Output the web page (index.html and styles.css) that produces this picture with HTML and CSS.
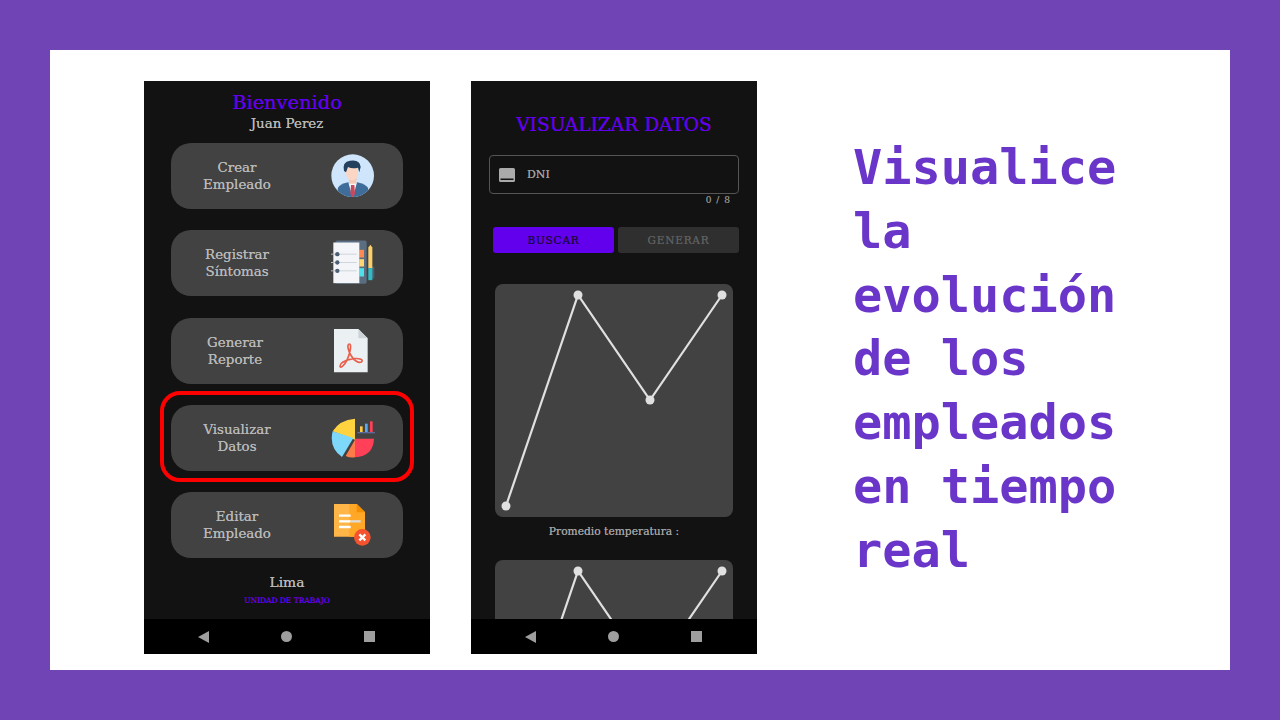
FILE: index.html
```html
<!DOCTYPE html>
<html lang="es">
<head>
  <meta charset="UTF-8">
  <meta name="viewport" content="width=device-width, initial-scale=1.0">
  <title>Visualice la evolución</title>
  <link rel="stylesheet" href="styles.css">
</head>
<body>
  <div class="slide">
    <div class="panel">

      <!-- Menu screen -->
      <div class="phone">
        <div class="screen menu">
          <h1 class="welcome">Bienvenido</h1>
          <p class="user">Juan Perez</p>

          <div class="menu-list">
            <div class="menu-item">
              <span class="menu-label">Crear<br>Empleado</span>
              <svg class="menu-icon" viewBox="30 24 138 138">
                <defs><clipPath id="avatarClip"><circle cx="98" cy="92" r="64"/></clipPath></defs>
                <circle cx="98" cy="92" r="64" fill="#cfe5fb"/>
                <g clip-path="url(#avatarClip)">
                  <path d="M125 28 A64 64 0 0 1 135 150 L162 150 L162 28Z" fill="#bcd9f7"/>
                  <path d="M50 160 L54 128 Q60 118 84 112 L112 112 Q136 118 144 128 L148 160Z" fill="#3f6d99"/>
                  <path d="M85 112 L98 160 L111 112Z" fill="#f4f6f8"/>
                  <rect x="87" y="92" width="22" height="24" fill="#f6c9b4"/>
                  <path d="M93 120 L103 120 L105 146 L98 158 L91 146Z" fill="#c9485b"/>
                  <path d="M78 62 H114 V84 Q112 106 96 106 Q80 106 78 84Z" fill="#fcd6c4"/>
                  <path d="M72 78 Q66 50 90 47 Q120 42 122 66 L118 82 L114 68 Q96 72 84 66 L78 82Z" fill="#24405f"/>
                </g>
              </svg>
            </div>

            <div class="menu-item">
              <span class="menu-label">Registrar<br>Síntomas</span>
              <svg class="menu-icon" viewBox="30 25.5 138 138">
                <rect x="46" y="27" width="94" height="130" rx="6" fill="#5b6d80"/>
                <rect x="118" y="55" width="14" height="23" fill="#ff8a50"/>
                <rect x="118" y="83" width="14" height="22" fill="#ffd670"/>
                <rect x="118" y="110" width="14" height="25" fill="#4fe0ea"/>
                <rect x="40" y="33" width="78" height="122" fill="#f3f5f8"/>
                <path d="M52 68H110M52 93H110M52 118H110" stroke="#cfd5dc" stroke-width="3"/>
                <path d="M33 68H50M33 93H50M33 118H50" stroke="#b6bec8" stroke-width="3"/>
                <circle cx="52" cy="68" r="6.5" fill="#4d5f73"/>
                <circle cx="52" cy="93" r="6.5" fill="#4d5f73"/>
                <circle cx="52" cy="118" r="6.5" fill="#4d5f73"/>
                <rect x="155" y="105" width="8" height="36" rx="2" fill="#4d5f73"/>
                <path d="M145 48 L151 40 L157 48 V110 H145Z" fill="#fbd06a"/>
                <rect x="145" y="110" width="12" height="36" fill="#30bcc6"/>
              </svg>
            </div>

            <div class="menu-item">
              <span class="menu-label label-shift">Generar<br>Reporte</span>
              <svg class="menu-icon" viewBox="30 24 138 138">
                <path d="M42 27 H115 L143 55 V157 H42Z" fill="#ebf0f3"/>
                <path d="M115 27 L143 55 H115Z" fill="#cdd3d8"/>
                <path d="M88 72 C80 72 84 92 94 108 C102 122 116 130 124 126 C132 120 120 114 100 116 C80 120 60 128 60 138 C60 146 72 140 82 118 C90 100 96 72 88 72Z" fill="none" stroke="#e8604c" stroke-width="5"/>
              </svg>
            </div>

            <div class="menu-item is-highlighted">
              <span class="menu-label">Visualizar<br>Datos</span>
              <svg class="menu-icon" viewBox="30 21 138 138">
                <path d="M105 32 V95 L38 70 Q58 36 105 32Z" fill="#ffd33f"/>
                <path d="M38 70 L100 90 L66 147 Q26 118 38 70Z" fill="#7dd8fa"/>
                <path d="M105 95 V148 Q90 150 77 144Z" fill="#ff7c48"/>
                <path d="M105 92 H162 Q160 144 105 148Z" fill="#ff4058"/>
                <rect x="120" y="55" width="8" height="18" fill="#ffc93f"/>
                <rect x="135" y="47" width="8" height="26" fill="#5aa9f0"/>
                <rect x="150" y="40" width="8" height="33" fill="#ff4058"/>
                <rect x="112" y="72" width="53" height="4" fill="#5c6b9c"/>
              </svg>
            </div>

            <div class="menu-item">
              <span class="menu-label">Editar<br>Empleado</span>
              <svg class="menu-icon" viewBox="30 21 138 138">
                <path d="M42 27 H110 L135 52 V125 H42Z" fill="#ffb547"/>
                <path d="M88 27 H110 L135 52 V125 H88Z" fill="#ffa726"/>
                <path d="M110 27 L135 52 H110Z" fill="#f58f00"/>
                <path d="M57 62H92M57 96H92" stroke="#fff" stroke-width="7"/>
                <path d="M57 79H92" stroke="#fff" stroke-width="7"/>
                <path d="M92 79H122" stroke="#dcdcdc" stroke-width="7"/>
                <circle cx="127" cy="127" r="25" fill="#f4532e"/>
                <path d="M118 118 L136 136 M136 118 L118 136" stroke="#fff" stroke-width="7"/>
              </svg>
            </div>
          </div>

          <p class="city">Lima</p>
          <p class="unit">UNIDAD DE TRABAJO</p>
        </div>
        <div class="nav-bar">
          <span class="nav-back"></span>
          <span class="nav-home"></span>
          <span class="nav-recent"></span>
        </div>
      </div>

      <!-- Charts screen -->
      <div class="phone">
        <div class="screen charts">
          <h2 class="screen-title">VISUALIZAR DATOS</h2>

          <div class="field">
            <svg class="field-icon" viewBox="0 0 16 14">
              <path d="M1.5 0H14.5Q16 0 16 1.5V12.5Q16 14 14.5 14H1.5Q0 14 0 12.5V1.5Q0 0 1.5 0ZM1.5 10.5V12H14.5V10.5Z" fill="#aaa" fill-rule="evenodd"/>
            </svg>
            <span class="field-text">DNI</span>
          </div>
          <div class="counter">0 / 8</div>

          <div class="actions">
            <button class="btn btn-primary">BUSCAR</button>
            <button class="btn btn-disabled">GENERAR</button>
          </div>

          <div class="chart">
            <svg class="chart-svg" viewBox="0 0 238 233">
              <polyline points="11,222 83,11 155,116 227,11" fill="none" stroke="#e0e0e0" stroke-width="2.2"/>
              <circle cx="11" cy="222" r="4.5" fill="#e0e0e0"/>
              <circle cx="83" cy="11" r="4.5" fill="#e0e0e0"/>
              <circle cx="155" cy="116" r="4.5" fill="#e0e0e0"/>
              <circle cx="227" cy="11" r="4.5" fill="#e0e0e0"/>
            </svg>
          </div>
          <p class="chart-caption">Promedio temperatura :</p>
          <div class="chart">
            <svg class="chart-svg" viewBox="0 0 238 233">
              <polyline points="11,222 83,11 155,116 227,11" fill="none" stroke="#e0e0e0" stroke-width="2.2"/>
              <circle cx="83" cy="11" r="4.5" fill="#e0e0e0"/>
              <circle cx="227" cy="11" r="4.5" fill="#e0e0e0"/>
            </svg>
          </div>
        </div>
        <div class="nav-bar">
          <span class="nav-back"></span>
          <span class="nav-home"></span>
          <span class="nav-recent"></span>
        </div>
      </div>

      <div class="headline">Visualice<br>la<br>evolución<br>de los<br>empleados<br>en tiempo<br>real</div>
    </div>
  </div>
</body>
</html>
```

FILE: styles.css
```css
* {
  box-sizing: border-box;
}
html, body {
  margin: 0;
  padding: 0;
}
.slide {
  width: 1280px;
  height: 720px;
  padding: 50px;
  background-color: #7044b5;
}
.panel {
  display: flex;
  height: 620px;
  padding: 31px 0 0 94px;
  background-color: #fff;
}

/* Phones */
.phone {
  display: flex;
  flex-direction: column;
  width: 286px;
  height: 573px;
  margin-right: 41px;
  background-color: #121212;
  font-family: "DejaVu Serif", serif;
  text-shadow: 0 0 0.6px currentColor;
}
.screen {
  flex: 1;
  min-height: 0;
  overflow: hidden;
}
.nav-bar {
  display: flex;
  align-items: center;
  justify-content: space-between;
  height: 35px;
  padding: 0 55px 0 54px;
  background-color: #000;
}
.nav-back {
  width: 0;
  height: 0;
  border-top: 6px solid transparent;
  border-bottom: 6px solid transparent;
  border-right: 11px solid #9e9e9e;
}
.nav-home {
  width: 11px;
  height: 11px;
  border-radius: 50%;
  background-color: #9e9e9e;
}
.nav-recent {
  width: 11px;
  height: 11px;
  background-color: #9e9e9e;
}

/* Menu screen */
.menu {
  padding-top: 11px;
  text-align: center;
}
.welcome {
  margin: 0;
  font-size: 19.4px;
  line-height: 22px;
  font-weight: normal;
  color: #6200ee;
}
.user {
  margin: 0 0 9px;
  font-size: 13.4px;
  line-height: 20px;
  color: #b8b8b8;
}
.menu-list {
  display: flex;
  flex-direction: column;
  gap: 21.25px;
  padding: 0 27px;
}
.menu-item {
  position: relative;
  display: flex;
  align-items: center;
  justify-content: space-between;
  height: 66px;
  padding-right: 27px;
  border-radius: 20px;
  background-color: #424242;
}
.is-highlighted::after {
  content: "";
  position: absolute;
  top: -14px;
  right: -11px;
  bottom: -11px;
  left: -11px;
  border: 4px solid #f00;
  border-radius: 20px;
}
.menu-label {
  width: 132px;
  font-size: 13.4px;
  line-height: 17px;
  color: #b8b8b8;
}
.label-shift {
  padding-right: 4px;
}
.menu-icon {
  width: 46px;
  height: 46px;
}
.city {
  margin: 15px 0 0;
  font-size: 13.8px;
  line-height: 18px;
  color: #b8b8b8;
}
.unit {
  margin: 5px 0 0;
  font-size: 7.5px;
  line-height: 10px;
  color: #6200ee;
}

/* Charts screen */
.charts {
  padding: 32px 18px 0;
}
.screen-title {
  margin: 0 0 18px;
  font-size: 18.6px;
  line-height: 24px;
  font-weight: normal;
  text-align: center;
  color: #6200ee;
}
.field {
  display: flex;
  align-items: center;
  height: 39px;
  width: 250px;
  border: 1px solid #555;
  border-radius: 4px;
  padding-left: 9px;
}
.field-icon {
  width: 16px;
  height: 14px;
}
.field-text {
  margin-left: 12px;
  font-size: 11px;
  color: #a0a0a0;
}
.counter {
  padding-right: 8px;
  width: 250px;
  font-size: 9px;
  line-height: 12px;
  letter-spacing: 1px;
  text-align: right;
  color: #8a8a8a;
}
.actions {
  display: flex;
  gap: 4px;
  width: 250px;
  margin: 21px 0 31px;
  padding-left: 4px;
}
.btn {
  flex: 1;
  height: 26px;
  padding: 0;
  border: none;
  border-radius: 3px;
  font-family: "DejaVu Serif", serif;
  font-size: 10.5px;
  letter-spacing: 0.8px;
  text-shadow: 0 0 0.6px currentColor;
}
.btn-primary {
  background-color: #6200ee;
  color: #1c0a44;
}
.btn-disabled {
  background-color: #2f2f2f;
  color: #5e5e5e;
}
.chart {
  width: 238px;
  height: 233px;
  margin-left: 6px;
  border-radius: 8px;
  background-color: #424242;
}
.chart-svg {
  display: block;
  width: 238px;
  height: 233px;
}
.chart-caption {
  margin: 7px 0 21px;
  font-size: 10.7px;
  line-height: 15px;
  text-align: center;
  color: #a0a0a0;
}

/* Right hand text */
.headline {
  margin: 55px 0 0 55px;
  font-family: "DejaVu Sans Mono", monospace;
  font-size: 48.6px;
  font-weight: bold;
  line-height: 63.8px;
  color: #6a35c9;
}
```
